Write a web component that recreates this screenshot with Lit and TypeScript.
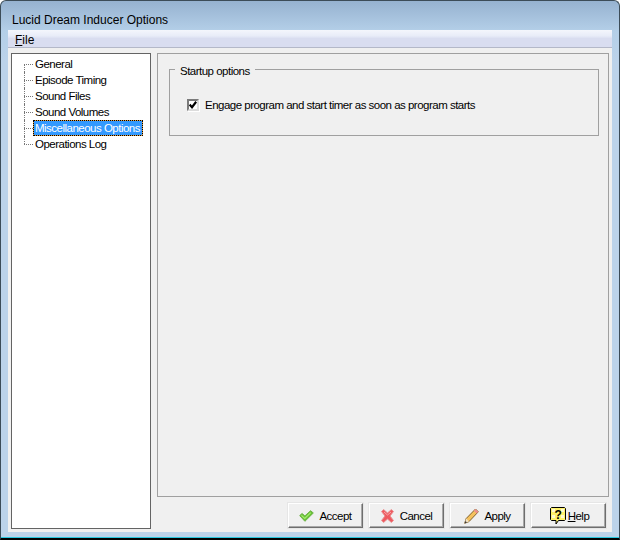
import { LitElement, html, css, svg } from "lit";
import { customElement } from "lit/decorators.js";

const items = ["General", "Episode Timing", "Sound Files", "Sound Volumes", "Miscellaneous Options", "Operations Log"];

const accept = svg`<svg class="ic g5" width="15" height="12" viewBox="0 0 15 12"><path d="M.7 5.6 3.2 3.4 5.8 6 11.6.7 14.3 3 5.9 11.3z" fill="#66c433" stroke="#6fb04a" stroke-width="1" stroke-linejoin="round"/><path d="M2.4 5.4 5.8 8.4 11.7 2.6" fill="none" stroke="#a8ea72" stroke-width="1.2"/></svg>`;
const cancel = svg`<svg class="ic g6" width="13" height="14" viewBox="0 0 13 14"><path d="M.6 2.6 2.6.6 6.5 4 10.4.6 12.4 2.6 9 7 12.4 11.4 10.4 13.4 6.5 10 2.6 13.4.6 11.4 4 7z" fill="#ee5a60" stroke="#e88c8c" stroke-width="1" stroke-linejoin="round"/><path d="M3 3 6.5 6 10 3" fill="none" stroke="#f8a8a8" stroke-width="1"/></svg>`;
const apply = svg`<svg class="ic g5" width="15" height="16" viewBox="0 0 15 16"><path d="M.7 15.3 2.2 10.5 11.5 1 14.3 3.8 5 13.6z" fill="#f5c25e" stroke="#80602c" stroke-width="1" stroke-linejoin="round"/><path d="M11.5 1 14.3 3.8 12.7 5.5 9.8 2.7z" fill="#ee8f90"/><path d="M.7 15.3 2.2 10.5 5 13.6z" fill="#f2e2c4"/><path d="M.7 15.3 1.4 13 3 14.5z" fill="#333"/></svg>`;
const help = svg`<svg class="ic g2" width="16" height="18" viewBox="0 0 16 18"><path d="M1.500.5h13l1 1v11l-1 1h-6l-2.500 3.500v-3.500h-4.500l-1-1v-11z" fill="#fff26a" stroke="#000"/><path d="M2 2h3v3H2zM11 2h3v3h-3zM2 8h3v3H2zM11 8h3v3h-3z" fill="#fffbd0"/><text x="8" y="11.500" text-anchor="middle" font-family="Liberation Sans, sans-serif" font-size="12" font-weight="700" fill="#000">?</text></svg>`;

@customElement("app-root")
export class AppRoot extends LitElement {
  static styles = css`
    :host {
      display: block;
      width: 620px;
      height: 540px;
      font-family: "Liberation Sans", Arial, sans-serif;
      font-size: 11.5px;
      letter-spacing: -0.51px;
      color: #000;
      overflow: hidden;
      background: #fff;
    }
    .win {
      box-sizing: border-box;
      width: 620px;
      height: 540px;
      display: flex;
      flex-direction: column;
      border: 1px solid #3c4c58;
      border-bottom: 2px solid #000;
      border-radius: 6px 6px 0 0;
      box-shadow: inset 0 -1px 0 #29c8e0;
      background: linear-gradient(to bottom, #96b2d0 0, #b4cfe8 30px, #bcd3ea 60px, #bcd3ea 100%);
      padding: 0 7px 6px 7px;
    }
    .title {
      height: 29px;
      flex: none;
      display: flex;
      align-items: center;
      padding: 8px 0 0 4px;
      box-sizing: border-box;
      font-size: 12px;
      letter-spacing: 0;
    }
    .menu {
      height: 18px;
      flex: none;
      display: flex;
      align-items: center;
      padding: 2px 0 0 7px;
      background: linear-gradient(to bottom, #f4f6fc 0, #e8ecf8 35%, #d9ddf0 50%, #d9ddf0 100%);
      border-bottom: 1px solid #b4b8c8;
      box-sizing: border-box;
      font-size: 12px;
      letter-spacing: 0;
    }
    .u { text-decoration: underline; }
    .body {
      flex: 1;
      display: flex;
      gap: 6px;
      background: #f0f0f0;
      padding: 5px 3px 3px 3px;
      min-height: 0;
    }
    .tree {
      box-sizing: border-box;
      width: 140px;
      flex: none;
      background: #fff;
      border: 1px solid #646464;
      padding: 2px 0 0 11px;
    }
    .node {
      height: 16px;
      display: flex;
      align-items: center;
      position: relative;
    }
    .node::before {
      content: "";
      width: 9px;
      margin-left: 1px;
      flex: none;
      border-top: 1px dotted #777;
    }
    .node::after {
      content: "";
      position: absolute;
      left: 1px;
      top: 0;
      height: 16px;
      border-left: 1px dotted #777;
    }
    .node:last-child::after { height: 8px; }
    .node:first-child::after { top: 8px; height: 8px; }
    .lbl {
      padding: 0 1px;
      height: 15px;
      line-height: 14px;
      white-space: nowrap;
      margin-left: 1px;
    }
    .sel {
      background: #3399ff;
      color: #fff;
      outline: 1px dotted #000;
      outline-offset: -1px;
      box-shadow: inset 0 0 0 1px #e8a040;
      margin-left: 0;
      width: 110px;
      height: 16px;
      line-height: 16px;
      box-sizing: border-box;
      padding: 0 0 0 2px;
    }
    .right {
      flex: 1;
      display: flex;
      flex-direction: column;
      min-width: 0;
    }
    .panel {
      flex: 1;
      box-sizing: border-box;
      border: 1px solid #a0a0a0;
      padding: 15px 9px 0 11px;
    }
    .group {
      box-sizing: border-box;
      height: 67px;
      border: 1px solid #a0a0a0;
      position: relative;
      padding: 29px 0 0 17px;
      display: flex;
      align-items: flex-start;
      gap: 6px;
    }
    .legend {
      position: absolute;
      left: 5px;
      top: -6px;
      background: #f0f0f0;
      padding: 0 5px;
      line-height: 14px;
    }
    .cb {
      box-sizing: border-box;
      width: 12px;
      height: 12px;
      background: #fff;
      border: 2px solid;
      border-color: #7a7a7a #dcdcdc #dcdcdc #7a7a7a;
      box-shadow: 1px 1px 0 #fff;
      display: flex;
      align-items: center;
      justify-content: center;
      flex: none;
    }
    .cb-t { line-height: 13px; white-space: nowrap; }
    .btns {
      flex: none;
      height: 32px;
      display: flex;
      justify-content: flex-end;
      gap: 6px;
      padding: 6px 3px 1px 0;
      box-sizing: border-box;
    }
    .btn {
      box-sizing: border-box;
      width: 75px;
      height: 25px;
      background: #f0f0f0;
      border: 1px solid;
      border-color: #fff #6e6e6e #6e6e6e #fff;
      box-shadow: 0 0 0 1px #e6e6e6, inset -1px -1px 0 #a8a8a8;
      display: flex;
      align-items: center;
      justify-content: center;
      flex: none;
    }
    .ic { flex: none; }
    .g5 { margin-right: 5px; }
    .g6 { margin-right: 6px; }
    .g2 { margin: 0 2px 0 2px; }
  `;

  render() {
    return html`<div class="win">
      <div class="title">Lucid Dream Inducer Options</div>
      <div class="menu"><span><span class="u">F</span>ile</span></div>
      <div class="body">
        <div class="tree">
          ${items.map(
            (t, i) => html`<div class="node"><span class="lbl ${i === 4 ? "sel" : ""}">${t}</span></div>`
          )}
        </div>
        <div class="right">
          <div class="panel">
            <div class="group">
              <span class="legend">Startup options</span>
              <span class="cb">
                <svg width="8" height="8" viewBox="0 0 8 8"><path d="M.6 3.600 3 6.200 7.200 .8" fill="none" stroke="#000" stroke-width="2.200"/></svg>
              </span>
              <span class="cb-t">Engage program and start timer as soon as program starts</span>
            </div>
          </div>
          <div class="btns">
            <div class="btn">${accept}<span>Accept</span></div>
            <div class="btn">${cancel}<span>Cancel</span></div>
            <div class="btn">${apply}<span>Apply</span></div>
            <div class="btn">${help}<span><span class="u">H</span>elp</span></div>
          </div>
        </div>
      </div>
    </div>`;
  }
}
